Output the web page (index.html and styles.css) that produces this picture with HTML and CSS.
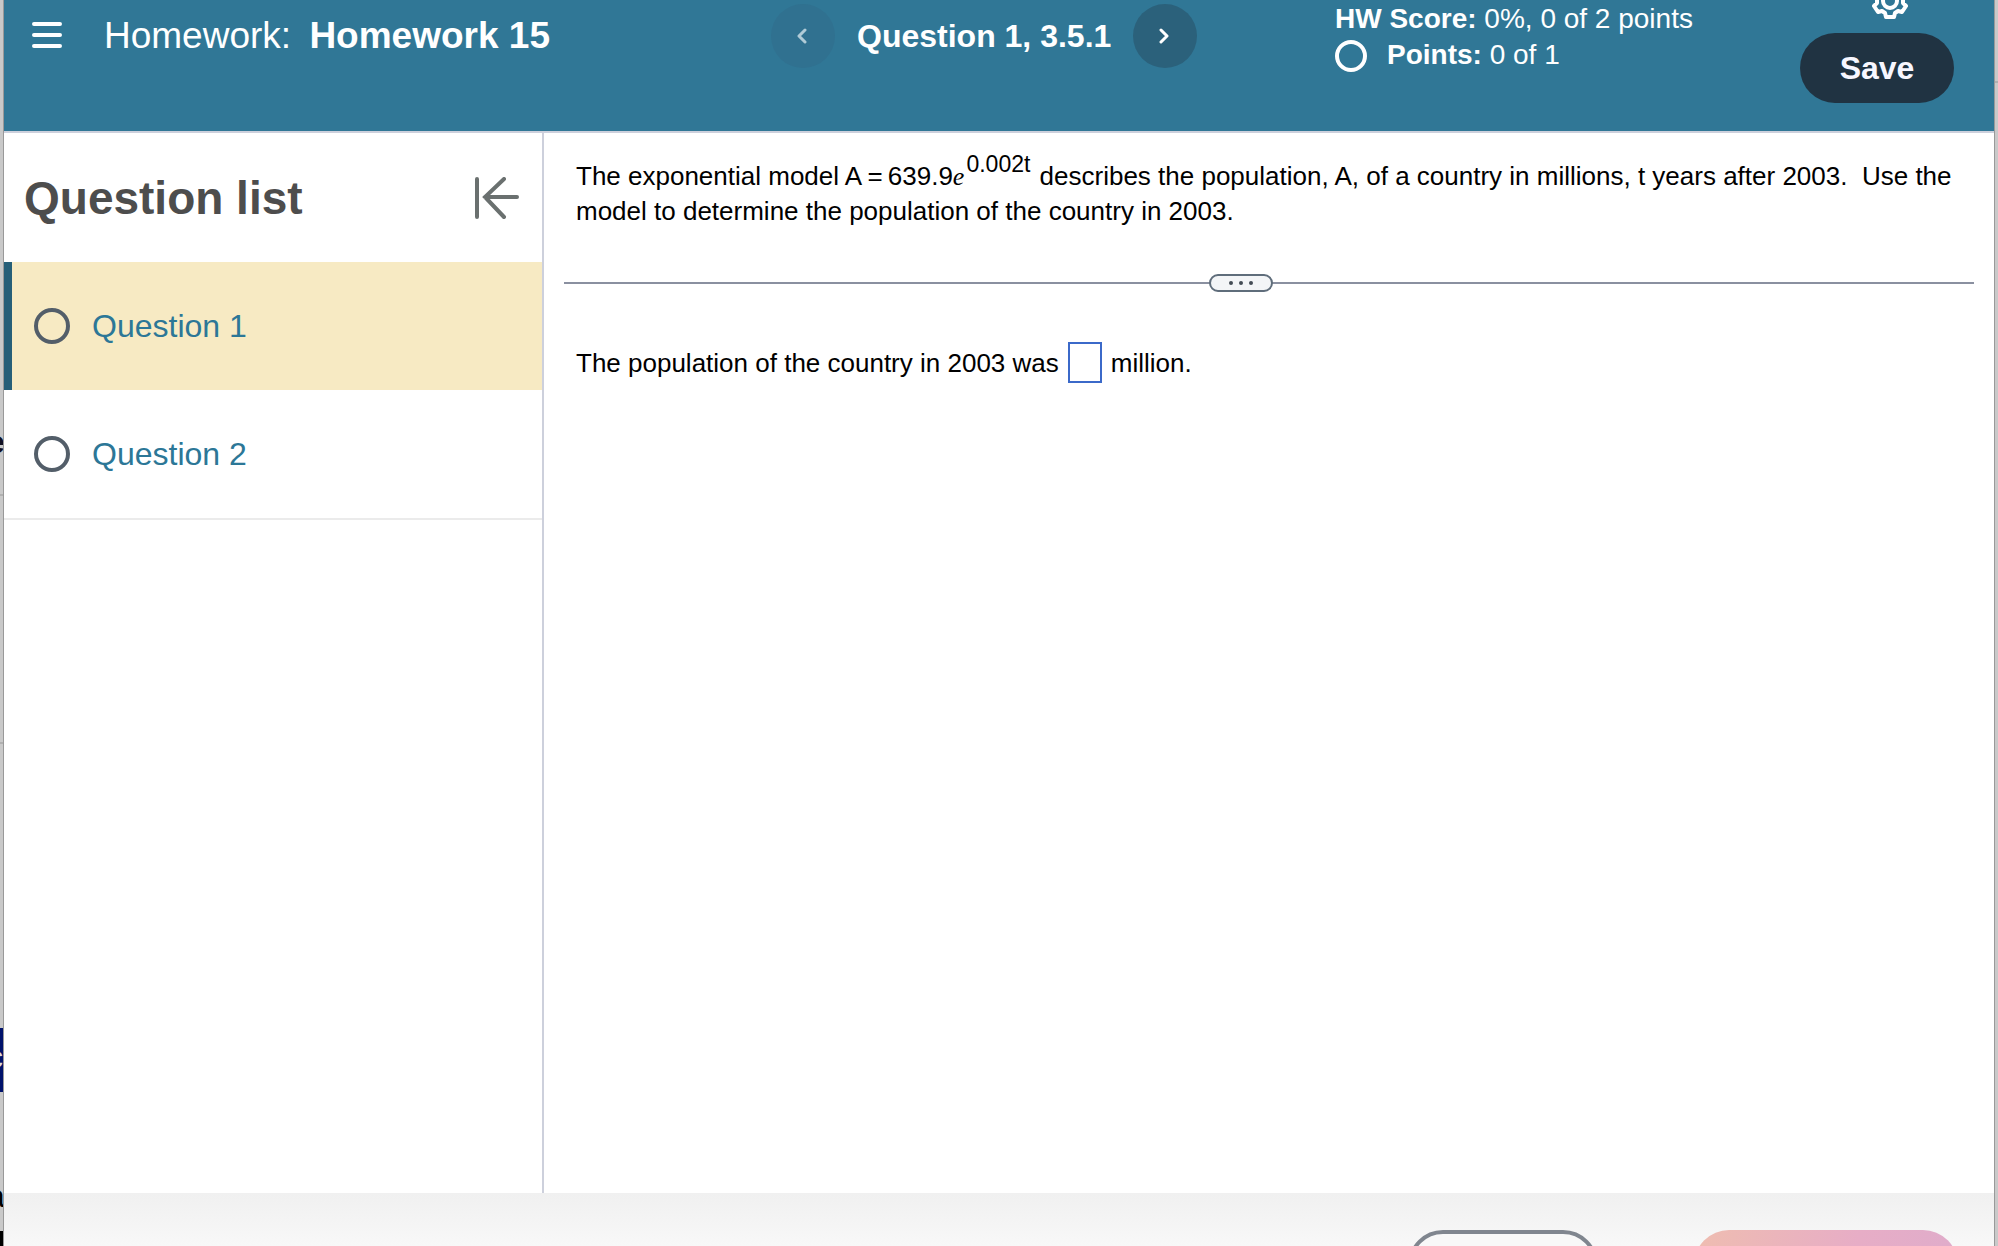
FILE: index.html
```html
<!DOCTYPE html>
<html lang="en">
<head>
  <meta charset="UTF-8" />
  <meta name="viewport" content="width=device-width, initial-scale=1.0"/>
  <title>Homework 15</title>
  <link rel="stylesheet" href="styles.css">
</head>
<body>
  <div class="behind behind-left" aria-hidden="true">
    <span class="scrap scrap-bold">e</span>
    <span class="scrap scrap-blue">c</span>
    <span class="scrap scrap-low">a</span>
    <span class="scrap scrap-end"></span>
  </div>

  <div class="window">
    <header class="topbar">
      <div class="course">
        <button class="icon-button" aria-label="Menu">
          <svg width="30" height="28" viewBox="0 0 30 28" fill="none" stroke="#fff" stroke-width="4" stroke-linecap="round">
            <path d="M2 2H28M2 13H28M2 24H28"/>
          </svg>
        </button>
        <h1>Homework: <strong>Homework 15</strong></h1>
      </div>

      <nav class="pager">
        <button class="round prev" aria-label="Previous question" disabled>
          <svg width="12" height="16" viewBox="0 0 12 16" fill="none" stroke="currentColor" stroke-width="3" stroke-linecap="round" stroke-linejoin="round">
            <path d="M8 2L2 8L8 14"/>
          </svg>
        </button>
        <span class="pager-title">Question 1, 3.5.1</span>
        <button class="round next" aria-label="Next question">
          <svg width="12" height="16" viewBox="0 0 12 16" fill="none" stroke="currentColor" stroke-width="3" stroke-linecap="round" stroke-linejoin="round">
            <path d="M2 2L8 8L2 14"/>
          </svg>
        </button>
      </nav>

      <div class="score">
        <p><strong>HW Score:</strong> 0%, 0 of 2 points</p>
        <p class="points"><span class="ring ring-white"></span><span><strong>Points:</strong> 0 of 1</span></p>
      </div>

      <div class="actions">
        <button class="icon-button gear" aria-label="Settings">
          <svg width="36" height="36" viewBox="-18 -18 36 36" fill="none" stroke="#fff" stroke-width="4" stroke-linejoin="round">
            <circle r="7"/>
            <path d="M-4 -16H4L5 -12L8 -10L12 -11L16 -5L13 -2V2L16 5L12 11L8 10L5 12L4 16H-4L-5 12L-8 10L-12 11L-16 5L-13 2V-2L-16 -5L-12 -11L-8 -10L-5 -12Z"/>
          </svg>
        </button>
        <button class="save">Save</button>
      </div>
    </header>

    <div class="workspace">
      <aside class="sidebar">
        <div class="sidebar-head">
          <h2>Question list</h2>
          <button class="icon-button" aria-label="Collapse question list">
            <svg width="46" height="42" viewBox="0 0 46 42" fill="none" stroke="#6a706f" stroke-width="4" stroke-linecap="round">
              <path d="M3 2V40M43 20H11M30 2L11 20L30 40"/>
            </svg>
          </button>
        </div>
        <ul class="questions">
          <li class="active"><a href="#q1"><span class="ring"></span>Question 1</a></li>
          <li><a href="#q2"><span class="ring"></span>Question 2</a></li>
        </ul>
      </aside>

      <main class="exercise">
        <p class="prompt">The exponential model <span class="formula">A&thinsp;=&thinsp;639.9<i>e</i><sup>0.002t</sup></span> describes the population, A, of a country in millions, t years after 2003.&nbsp; Use the model to determine the population of the country in 2003.</p>
        <div class="divider">
          <button class="handle" aria-label="Resize panels">
            <svg width="28" height="6" viewBox="0 0 28 6" fill="#444c55">
              <circle cx="4" cy="3" r="2"/><circle cx="14" cy="3" r="2"/><circle cx="24" cy="3" r="2"/>
            </svg>
          </button>
        </div>
        <div class="answer">
          <label for="answer">The population of the country in 2003 was</label>
          <input type="text" id="answer" />
          <span>million.</span>
        </div>
      </main>
    </div>

    <footer class="bottombar">
      <button class="outline" aria-label="Clear all"></button>
      <button class="check" aria-label="Check answer"></button>
    </footer>
  </div>

  <div class="behind behind-right" aria-hidden="true"></div>
</body>
</html>
```
FILE: styles.css
```css
:root {
  --teal: #307796;
  --navy: #203342;
  --line: #cdd0dc;
  --link: #2c7797;
}

* {
  box-sizing: border-box;
}

body {
  margin: 0;
  height: 100vh;
  overflow: hidden;
  display: grid;
  grid-template-columns: 4px minmax(0, 1fr) 4px;
  font-family: "Liberation Sans", Arial, sans-serif;
  color: #000;
  background: #c8c8c8;
}

h1, h2, p, ul {
  margin: 0;
  padding: 0;
}

button {
  font-family: inherit;
  border: none;
  padding: 0;
  cursor: pointer;
}

.icon-button {
  background: none;
  display: flex;
}

/* page showing behind the window */
.behind {
  position: relative;
  overflow: hidden;
}

.behind-left {
  border-right: 1px solid #999;
  background: linear-gradient(#c9c9c9 494px, #b0b0b0 494px 496px, #c9c9c9 496px 742px, #b0b0b0 742px 744px, #c9c9c9 744px);
}

.behind-right {
  border-left: 1px solid #999;
  background: linear-gradient(#c9c9c9 81px, #b0b0b0 81px 83px, #c9c9c9 83px);
}

.scrap {
  position: absolute;
  right: 0;
  width: 16px;
  font-size: 32px;
  line-height: 36px;
}

.scrap-bold {
  top: 424px;
  font-weight: bold;
  color: #112;
}

.scrap-blue {
  top: 1028px;
  height: 64px;
  line-height: 58px;
  color: #ddd;
  background: #00126b;
}

.scrap-low {
  top: 1178px;
}

.scrap-end {
  top: 1231px;
  height: 15px;
  background: #000;
}

.window {
  height: 100vh;
  display: flex;
  flex-direction: column;
  background: #fff;
}

.topbar {
  flex: none;
  height: 133px;
  display: grid;
  grid-template-columns: 767fr 564fr 465fr 194fr;
  align-items: start;
  color: #fff;
  background: var(--teal);
  border-bottom: 2px solid var(--line);
}

.course {
  display: flex;
  align-items: center;
  gap: 42px;
  padding: 16px 0 0 28px;
}

.course h1 {
  font-size: 37px;
  line-height: 40px;
  font-weight: normal;
}

.course strong {
  margin-left: 8px;
}

.pager {
  display: flex;
  align-items: center;
  gap: 22px;
  padding-top: 4px;
}

.pager-title {
  font-size: 32px;
  font-weight: bold;
}

.round {
  width: 64px;
  height: 64px;
  border-radius: 50%;
  display: flex;
  align-items: center;
  justify-content: center;
}

.prev {
  color: #b0cbd7;
  background: #307190;
}

.next {
  color: #fff;
  background: #2b617b;
}

.score {
  padding-top: 1px;
  font-size: 28px;
  line-height: 36px;
}

.points {
  display: flex;
  gap: 20px;
}

.ring {
  flex: none;
  width: 36px;
  height: 36px;
  border: 4px solid #535e69;
  border-radius: 50%;
}

.ring-white {
  width: 32px;
  height: 32px;
  margin-top: 3px;
  border-color: #fff;
}

.actions {
  display: flex;
  flex-direction: column;
  align-items: flex-end;
  gap: 14px;
  margin-top: -17px;
  padding-right: 40px;
}

.gear {
  margin-right: 46px;
}

.save {
  width: 154px;
  height: 70px;
  border-radius: 35px;
  font-size: 32px;
  font-weight: bold;
  color: #f7f7ff;
  background: var(--navy);
}

.workspace {
  flex: 1;
  display: flex;
  min-height: 0;
}

.sidebar {
  flex: none;
  width: 540px;
  border-right: 2px solid var(--line);
}

.sidebar-head {
  height: 129px;
  display: flex;
  align-items: center;
  justify-content: space-between;
  padding: 0 22px 0 20px;
}

.sidebar-head h2 {
  font-size: 46px;
  color: #4d4d4d;
}

.questions {
  list-style: none;
  border-bottom: 2px solid #ebebeb;
}

.questions a {
  height: 128px;
  display: flex;
  align-items: center;
  gap: 22px;
  padding: 0 30px;
  font-size: 32px;
  color: var(--link);
  text-decoration: none;
}

.questions .active {
  background: #f7eac3;
  box-shadow: inset 8px 0 #265f78;
}

.exercise {
  flex: 1;
  min-width: 0;
  padding: 26px 20px;
  font-size: 26px;
  line-height: 34px;
}

.prompt {
  padding: 0 12px;
}

.formula {
  white-space: nowrap;
}

.formula i {
  font-family: "Liberation Serif", serif;
}

.formula sup {
  margin: 0 2px;
  font-size: 23px;
  line-height: 0;
  vertical-align: 13px;
}

.divider {
  display: flex;
  justify-content: center;
  margin-top: 46px;
  padding-right: 56px;
  background: linear-gradient(#8a90a0, #8a90a0) center / 100% 2px no-repeat;
}

.handle {
  width: 64px;
  height: 18px;
  display: flex;
  align-items: center;
  justify-content: center;
  border: 2px solid #5f6d7b;
  border-radius: 9px;
  background: #f3f5f7;
}

.answer {
  display: flex;
  align-items: center;
  gap: 9px;
  margin-top: 50px;
  padding: 0 12px;
}

.answer input {
  width: 34px;
  height: 41px;
  padding: 0 4px;
  font: inherit;
  border: 2px solid #3b69c9;
  border-radius: 0;
}

.bottombar {
  flex: none;
  height: 53px;
  display: flex;
  align-items: flex-start;
  justify-content: flex-end;
  gap: 96px;
  padding: 37px 36px 0;
  overflow: hidden;
  background: linear-gradient(#f0f0f0, #f8f8f8);
}

.bottombar button {
  flex: none;
  height: 70px;
  border-radius: 35px;
}

.outline {
  width: 190px;
  border: 4px solid #80868f;
  background: #f8f8f8;
}

.check {
  width: 264px;
  background: linear-gradient(100deg, #efbdb0, #e7adc6 60%, #dfaccb);
}
```
